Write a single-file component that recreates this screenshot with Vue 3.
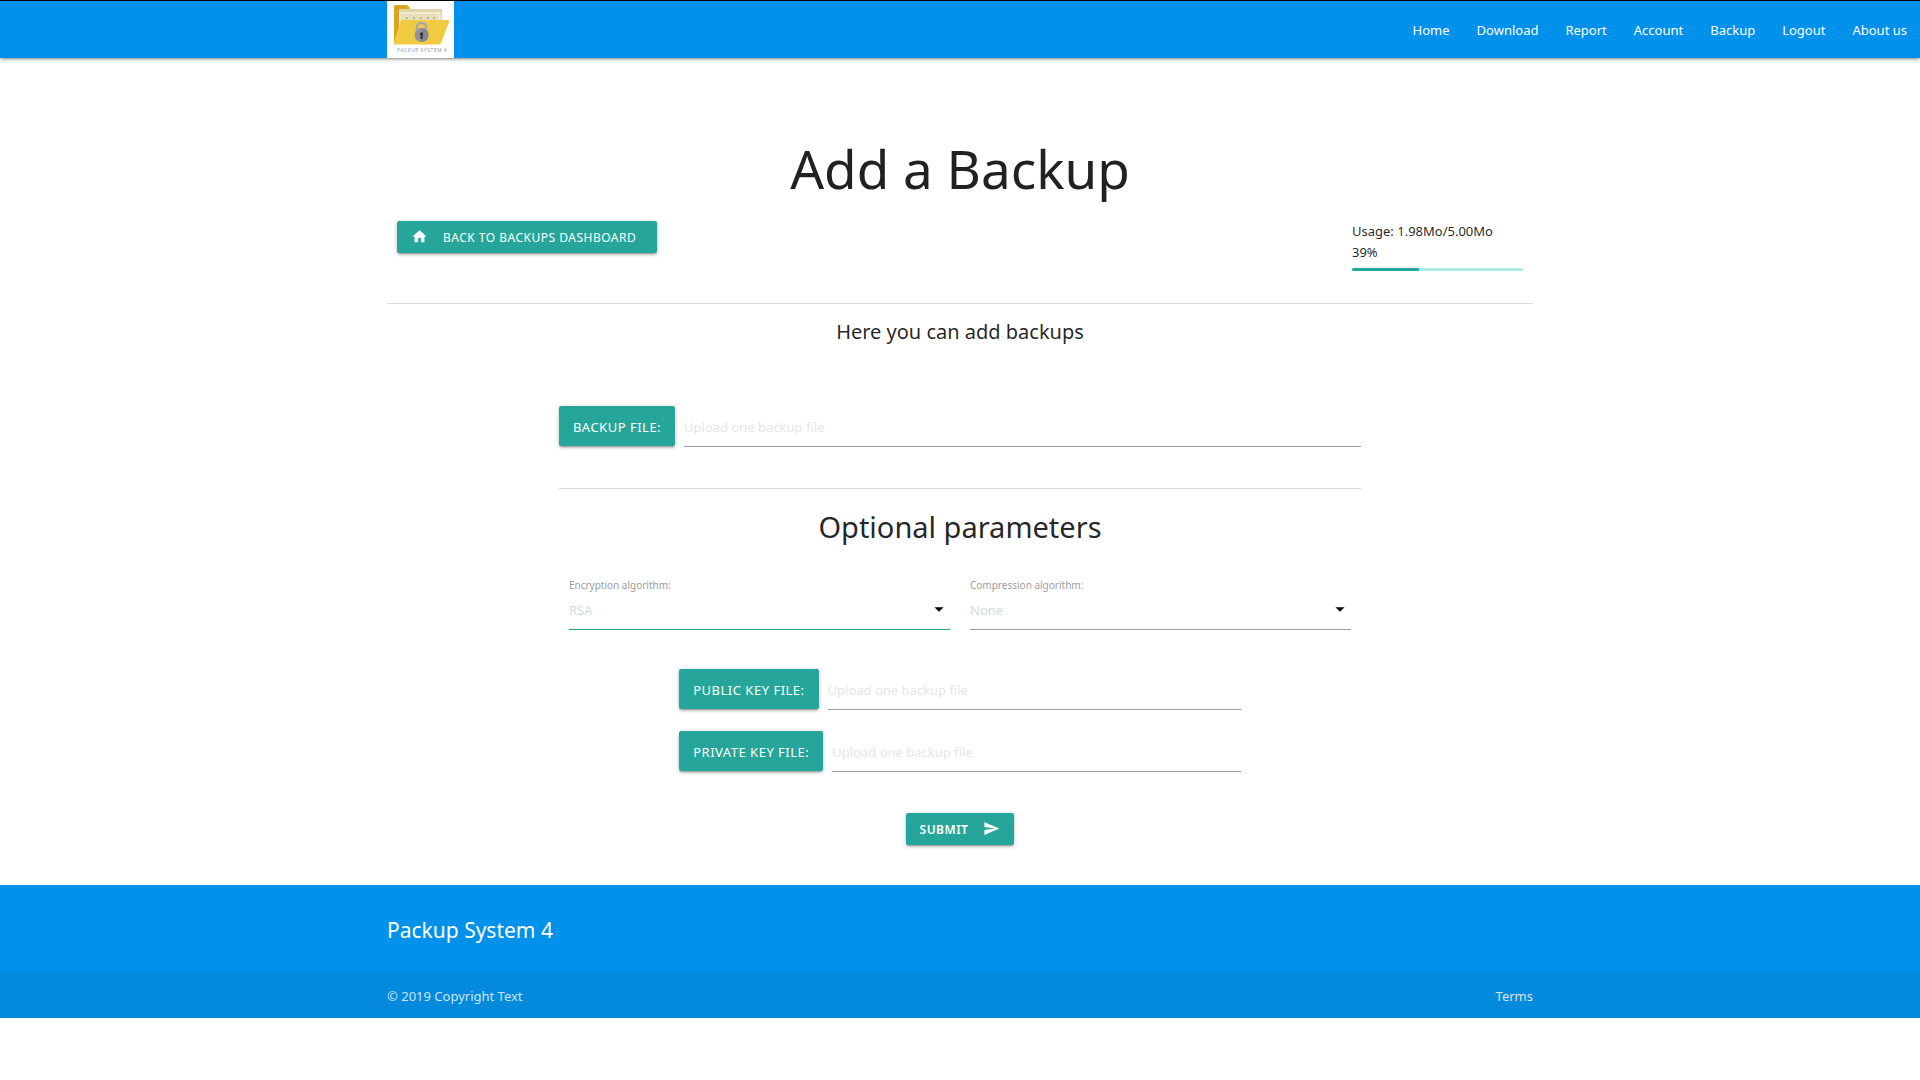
<script setup>
import { ref } from 'vue'

const links = ['Home', 'Download', 'Report', 'Account', 'Backup', 'Logout', 'About us']
const usage = { used: '1.98Mo', total: '5.00Mo', percent: 39 }
const keyFiles = [
  { id: 'public-key', label: 'Public key file:' },
  { id: 'private-key', label: 'Private key file:' },
]
const encryption = ref('RSA')
const compression = ref('None')
const names = ref({})

function pick(id) {
  document.getElementById(id).click()
}
function picked(id, event) {
  names.value[id] = event.target.files[0]?.name ?? ''
}
</script>

<template>
  <div class="page">
    <header class="topbar">
      <a href="#" class="logo" aria-label="Packup System 4">
        <svg viewBox="0 0 67 57" width="67" height="57" aria-hidden="true">
          <path d="M7 6q0-2 2-2h10q2 0 3 2l1 2h20q2 0 2 2v31H7z" fill="#d9a51c" />
          <path d="M12 8h43v32H12z" fill="#dfd5a8" />
          <path d="M12 11h41l1 4v24H12z" fill="#f1e9c9" />
          <path d="M14 13h37v26H14z" fill="#e8dfba" />
          <path d="M19 17h2m5 0h2m5 0h2m5 0h2m4 0h2" stroke="#8d8873" stroke-width="1" />
          <path d="M14 19h47q1.500 0 1 2l-8 21q-1 1.500-2 1.500H8q-2 0-1-2z" fill="#f0cb42" />
          <path d="M30 31v-5q0-4 4.500-4t4.500 4v5" fill="none" stroke="#aaa9b0" stroke-width="2.400" />
          <circle cx="34.500" cy="34" r="7" fill="#94939d" />
          <path d="M34.500 27a7 7 0 0 1 0 14z" fill="#85848f" />
          <circle cx="34.500" cy="33" r="1.700" fill="#34343b" />
          <path d="M33.500 33h2v5h-2z" fill="#34343b" />
          <text x="10" y="51" font-size="5" letter-spacing="0.5" fill="#999">PACKUP SYSTEM 4</text>
        </svg>
      </a>
      <nav class="links">
        <a v-for="link in links" :key="link" href="#">{{ link }}</a>
      </nav>
    </header>

    <main class="container">
      <h1>Add a Backup</h1>

      <div class="toolbar">
        <button type="button" class="btn back">
          <svg viewBox="0 0 24 24" width="17" height="17" aria-hidden="true">
            <path d="M10 20v-6h4v6h5v-8h3L12 3 2 12h3v8z" fill="currentColor" />
          </svg>
          Back to backups dashboard
        </button>
        <div class="usage">
          <div>Usage: {{ usage.used }}/{{ usage.total }}</div>
          <div>{{ usage.percent }}%</div>
          <div class="track">
            <div class="fill" :style="{ width: usage.percent + '%' }"></div>
          </div>
        </div>
      </div>

      <hr />
      <h2 class="intro">Here you can add backups</h2>

      <form class="form" @submit.prevent>
        <div class="file-row">
          <button type="button" class="btn tall" @click="pick('backup')">Backup file:</button>
          <input id="backup" type="file" hidden @change="picked('backup', $event)" />
          <input class="path" type="text" readonly :value="names.backup" aria-label="Backup file" placeholder="Upload one backup file" />
        </div>

        <hr />
        <h2 class="optional">Optional parameters</h2>

        <div class="selects">
          <div class="field">
            <label for="encryption">Encryption algorithm:</label>
            <div class="select active">
              <select id="encryption" v-model="encryption">
                <option>RSA</option>
                <option>None</option>
              </select>
              <svg viewBox="0 0 24 24" width="22" height="22" aria-hidden="true"><path d="M7 10l5 5 5-5z" /></svg>
            </div>
          </div>
          <div class="field">
            <label for="compression">Compression algorithm:</label>
            <div class="select">
              <select id="compression" v-model="compression">
                <option>None</option>
                <option>Zip</option>
              </select>
              <svg viewBox="0 0 24 24" width="22" height="22" aria-hidden="true"><path d="M7 10l5 5 5-5z" /></svg>
            </div>
          </div>
        </div>

        <div class="keys">
          <div v-for="file in keyFiles" :key="file.id" class="file-row">
            <button type="button" class="btn tall" @click="pick(file.id)">{{ file.label }}</button>
            <input :id="file.id" type="file" hidden @change="picked(file.id, $event)" />
            <input class="path" type="text" readonly :value="names[file.id]" :aria-label="file.label" placeholder="Upload one backup file" />
          </div>
        </div>

        <button type="submit" class="btn submit">
          Submit
          <svg viewBox="0 0 24 24" width="17" height="17" aria-hidden="true">
            <path d="M2.010 21L23 12 2.010 3 2 10l15 2-15 2z" fill="currentColor" />
          </svg>
        </button>
      </form>
    </main>

    <footer>
      <div class="brand"><div class="container">Packup System 4</div></div>
      <div class="legal">
        <div class="container legal-row">
          <span>© 2019 Copyright Text</span>
          <a href="#">Terms</a>
        </div>
      </div>
    </footer>
  </div>
</template>

<style>
body {
  background: #fff;
}
</style>

<style scoped>
.page {
  --content: min(1146px, 60%);
  --teal: #26a69a;
  font: 13px/21px "Noto Sans", "Open Sans", sans-serif;
  color: rgba(0, 0, 0, 0.87);
}
.page *,
.page {
  box-sizing: border-box;
}
.container {
  width: var(--content);
  margin: 0 auto;
}
.topbar {
  display: flex;
  justify-content: space-between;
  align-items: center;
  padding: 0 13px 0 calc((100% - var(--content)) / 2);
  border-top: 1px solid #000;
  background: #0091ea;
  box-shadow: 0 2px 2px rgba(0, 0, 0, 0.14), 0 3px 1px -2px rgba(0, 0, 0, 0.12), 0 1px 5px rgba(0, 0, 0, 0.2);
}
.logo {
  display: flex;
  background: #fff;
}
.links {
  display: flex;
  gap: 27px;
  padding-top: 2px;
}
.links a {
  color: #fff;
  text-decoration: none;
}
h1,
h2 {
  margin: 0;
  font-weight: 400;
  text-align: center;
}
h1 {
  padding-top: 79px;
  font-size: 53px;
  line-height: 64px;
}
.toolbar {
  display: flex;
  justify-content: space-between;
  align-items: flex-start;
  height: 82px;
  margin: 20px 10px 0;
}
.usage {
  width: 171px;
}
.track {
  height: 3px;
  margin-top: 5px;
  border-radius: 2px;
  background: #acece6;
  overflow: hidden;
}
.fill {
  height: 3px;
  background: var(--teal);
}
.btn {
  display: inline-flex;
  align-items: center;
  flex-shrink: 0;
  gap: 15px;
  height: 32px;
  padding: 2px 14px 0;
  border: 0;
  border-radius: 2px;
  background: var(--teal);
  color: #fff;
  font: 12px/20px "Noto Sans", "Open Sans", sans-serif;
  letter-spacing: 0.5px;
  text-transform: uppercase;
  white-space: nowrap;
  cursor: pointer;
  box-shadow: 0 2px 2px rgba(0, 0, 0, 0.14), 0 3px 1px -2px rgba(0, 0, 0, 0.12), 0 1px 5px rgba(0, 0, 0, 0.2);
}
.btn svg {
  margin-bottom: 3px;
}
.back {
  min-width: 260px;
}
.tall {
  height: 40px;
  font-size: 13px;
}
hr {
  width: 100%;
  height: 1px;
  margin: 0;
  border: 0;
  background: #dcdcdc;
}
.intro {
  padding-top: 16px;
  font-size: 20px;
  line-height: 24px;
}
.form {
  display: flex;
  flex-direction: column;
  width: 70%;
  margin: 0 auto;
  padding: 62px 0 40px;
}
.file-row {
  display: flex;
  gap: 9px;
}
.path {
  flex: 1;
  min-width: 0;
  height: 41px;
  padding: 2px 0 0;
  border: 0;
  border-bottom: 1px solid #9e9e9e;
  outline: 0;
  background: transparent;
  color: inherit;
  font: inherit;
}
.path::placeholder {
  color: #e6e6e6;
  opacity: 1;
}
.form > hr {
  margin-top: 41px;
}
.optional {
  padding-top: 20px;
  font-size: 29px;
  line-height: 36px;
}
.selects {
  display: flex;
  gap: 20px;
  padding: 33px 10px 0;
}
.field {
  flex: 1;
}
.field label {
  display: block;
  color: #9e9e9e;
  font-size: 10px;
  line-height: 14px;
}
.select {
  position: relative;
  border-bottom: 1px solid #9e9e9e;
}
.active {
  border-color: var(--teal);
}
select {
  display: block;
  width: 100%;
  height: 37px;
  padding: 0;
  border: 0;
  outline: 0;
  appearance: none;
  background: transparent;
  color: #d1dce1;
  font: inherit;
}
.select svg {
  position: absolute;
  top: 6px;
  right: 0;
  pointer-events: none;
}
.keys {
  display: flex;
  flex-direction: column;
  gap: 21px;
  width: 70%;
  margin: 39px auto 0;
}
.submit {
  align-self: center;
  margin-top: 41px;
  font-weight: 600;
}
.brand {
  padding: 33px 0 31px;
  background: #0091ea;
  color: #fff;
  font-size: 21px;
  line-height: 24px;
}
.legal {
  padding: 13px 0 11px;
  background: #048adc;
  color: rgba(255, 255, 255, 0.8);
}
.legal-row {
  display: flex;
  justify-content: space-between;
}
.legal a {
  color: #e0e0e0;
  text-decoration: none;
}
</style>
